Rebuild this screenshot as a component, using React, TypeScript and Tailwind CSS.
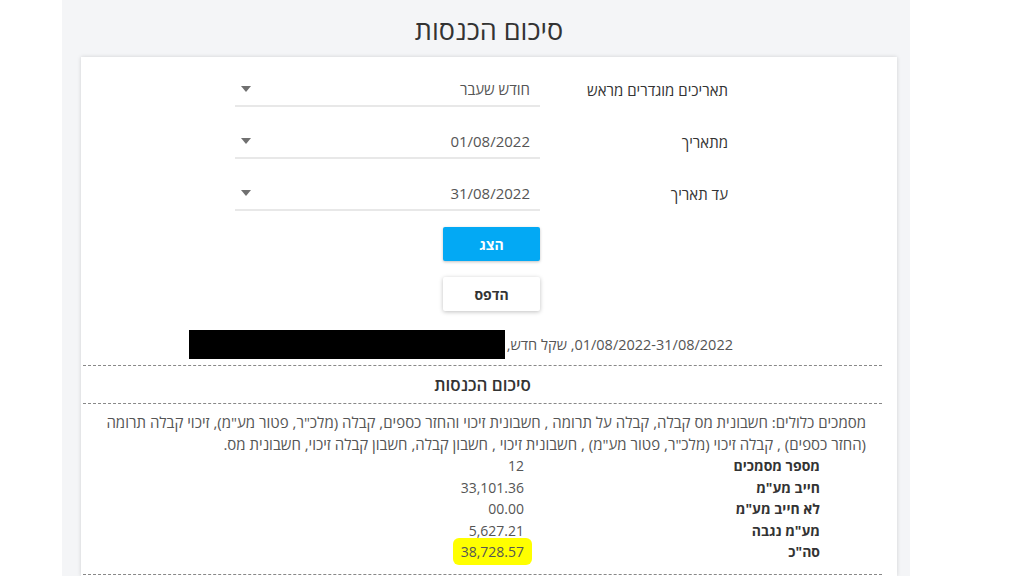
import React from "react";

const font = { fontFamily: '"Open Sans", "Noto Sans", sans-serif' };

function SelectRow({ label, value }: { label: string; value: string }) {
  return (
    <div className="flex items-center mr-[169px]">
      <div className="w-[188px] text-[15px] text-[#333] pt-[2px]">{label}</div>
      <div className="w-[305px] h-[36px] flex items-center justify-between border-b-2 border-[#e8e8e8] pr-[10px] pl-[6px] pt-[2px]">
        <span className="text-[15px] text-[#555]">{value}</span>
        <svg width="10" height="6" viewBox="0 0 10 6">
          <path d="M0 0 L10 0 L5 6 Z" fill="#707070" />
        </svg>
      </div>
    </div>
  );
}

const rows: [string, string][] = [
  ["מספר מסמכים", "12"],
  ['חייב מע"מ', "33,101.36"],
  ['לא חייב מע"מ', "00.00"],
  ['מע"מ נגבה', "5,627.21"],
];

export default function App() {
  return (
    <div className="w-[1024px] h-[576px] bg-white overflow-hidden" style={font}>
      <div className="ml-[62px] w-[848px] h-[576px] bg-[#f4f5f7] flex flex-col">
        <div className="ml-[19px] w-[816px] h-[57px] flex items-center justify-center">
          <h1 className="text-[27px] text-[#333] leading-none pt-[2px]" dir="rtl">סיכום הכנסות</h1>
        </div>
        <div
          className="ml-[19px] w-[816px] flex-1 bg-white shadow-[0_0_4px_rgba(0,0,0,0.15)] pt-[14px]"
          dir="rtl"
        >
          <div className="flex flex-col gap-[16px]">
            <SelectRow label="תאריכים מוגדרים מראש" value="חודש שעבר" />
            <SelectRow label="מתאריך" value="01/08/2022" />
            <SelectRow label="עד תאריך" value="31/08/2022" />
          </div>
          <div className="flex flex-col gap-[16px] mt-[16px] mr-[357px]">
            <button className="w-[97px] h-[34px] bg-[#03a9f4] text-white text-[14px] font-bold rounded-[2px] shadow-[0_1px_3px_rgba(0,0,0,0.25)]">
              הצג
            </button>
            <button className="w-[97px] h-[34px] bg-white text-[#333] text-[14px] font-bold rounded-[2px] shadow-[0_1px_4px_rgba(0,0,0,0.25)]">
              הדפס
            </button>
          </div>
          <div className="mt-[19px] mr-[164px] flex items-center h-[29px] text-[14.5px] text-[#555]">
            <span>01/08/2022-31/08/2022, שקל חדש,</span>
            <span className="inline-block w-[316px] h-[29px] bg-black mr-[2px]" />
          </div>
          <div className="mt-[6px] ml-[2px] mr-[15px] border-t border-dashed border-[#888]">
            <div className="h-[37px] flex items-center justify-center text-[17px] font-semibold text-[#333]">
              סיכום הכנסות
            </div>
            <div className="border-t border-dashed border-[#888] pt-[8px] pr-[16px] pl-[14px]">
              <p className="text-[15px] leading-[21.5px] text-[#555]">
                {'מסמכים כלולים: חשבונית מס קבלה, קבלה על תרומה , חשבונית זיכוי והחזר כספים, קבלה (מלכ"ר, פטור מע"מ), זיכוי קבלה תרומה (החזר כספים) , קבלה זיכוי (מלכ"ר, פטור מע"מ) , חשבונית זיכוי , חשבון קבלה, חשבון קבלה זיכוי, חשבונית מס.'}
              </p>
              <div className="mr-[46px] flex flex-col">
                {rows.map(([l, v]) => (
                  <div key={l} className="flex h-[21.5px] items-center text-[14px]">
                    <div className="w-[296px] font-bold text-[#333]">{l}</div>
                    <div className="text-[#555]">{v}</div>
                  </div>
                ))}
                <div className="flex h-[21.5px] items-center text-[14px]">
                  <div className="w-[296px] font-bold text-[#333]">{'סה"כ'}</div>
                  <div className="text-[#555]">
                    <span className="bg-[#ffff00] px-[8px] py-[4px] -mr-[8px] rounded-[6px]">38,728.57</span>
                  </div>
                </div>
              </div>
            </div>
            <div className="mt-[11px] border-t border-dashed border-[#888]" />
          </div>
        </div>
      </div>
    </div>
  );
}
